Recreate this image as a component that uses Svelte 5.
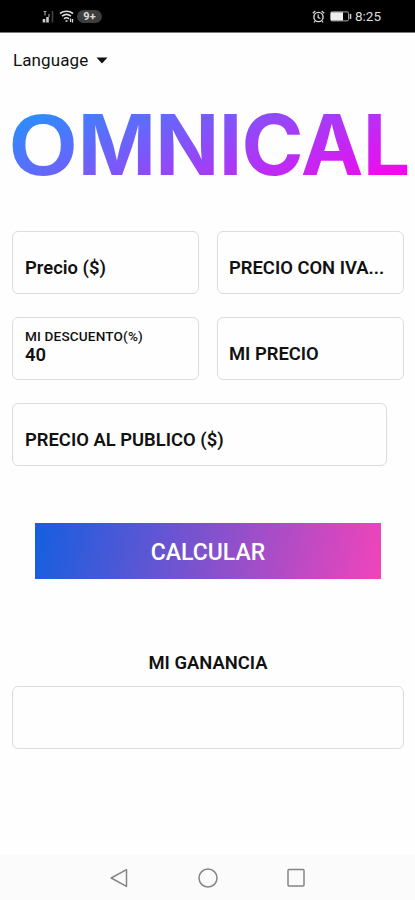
<script lang="ts">
  interface Field {
    id: string;
    label: string;
    value?: string;
    wide?: boolean;
  }

  const fields: Field[] = [
    { id: "precio", label: "Precio ($)" },
    { id: "iva", label: "PRECIO CON IVA..." },
    { id: "descuento", label: "MI DESCUENTO(%)", value: "40" },
    { id: "mi-precio", label: "MI PRECIO" },
    { id: "publico", label: "PRECIO AL PUBLICO ($)", wide: true },
  ];
</script>

<div class="screen">
  <header class="status">
    <div class="status__group">
      <svg class="signal" width="12" height="13" viewBox="0 0 12 13">
        <path d="M2 12.500V9M5.500 12.500V7" stroke="#ccc" stroke-width="2.600" />
        <path d="M10.500 12.500V1" stroke="#444" stroke-width="1.500" />
        <path d="M1.500 1.500h3M3 1.500v4M7 4v3" stroke="#999" stroke-width="1.200" />
      </svg>
      <svg class="wifi" width="15" height="13" viewBox="0 0 15 13" fill="none" stroke="#ddd">
        <path d="M1 3.500C4.800.5 10.200.5 14 3.500" stroke-width="1.600" />
        <path d="M3 6.200C5.700 4 9.300 4 12 6.200M5 8.800c1.600-1.300 3.400-1.300 5 0" stroke-width="1.500" />
        <path d="M6.500 11h2M11.500 8.500v3.500M13.500 9v3.500" stroke-width="1.300" />
      </svg>
      <span class="badge">9+</span>
    </div>
    <div class="status__group">
      <svg class="alarm" width="13" height="13" viewBox="0 0 13 13" fill="none" stroke="#ddd">
        <circle cx="6.500" cy="7" r="4.600" stroke-width="1.400" />
        <path d="M.8 3.200 3.300 1M12.200 3.200 9.700 1M6.200 4.500v3l2.200 1M3 11l-1 1.500M10 11l1 1.500" stroke-width="1.200" />
      </svg>
      <svg class="battery" width="22" height="11" viewBox="0 0 22 11">
        <rect x=".6" y=".9" width="18" height="9" rx="1.500" fill="none" stroke="#aaa" stroke-width="1" />
        <rect x="1" y="1.300" width="12" height="8.200" fill="#eee" />
        <path d="M20.500 3v5" stroke="#ccc" stroke-width="1.600" />
      </svg>
      <time class="clock">8:25</time>
    </div>
  </header>

  <main class="content">
    <button type="button" class="language">
      Language
      <svg width="12" height="7" viewBox="0 0 12 7">
        <path d="M.5.500h11L6 6.500z" fill="#111" />
      </svg>
    </button>

    <h1 class="logo">OMNICAL</h1>

    <div class="fields">
      {#each fields as field (field.id)}
        <div class="field" class:field--wide={field.wide}>
          <span class="field__label" class:field__label--small={field.value}>{field.label}</span>
          {#if field.value}
            <span class="field__value">{field.value}</span>
          {/if}
        </div>
      {/each}
    </div>

    <button type="button" class="submit">CALCULAR</button>

    <h2 class="result-title">MI GANANCIA</h2>
    <output class="result"></output>
  </main>

  <nav class="nav">
    <svg width="20" height="22" viewBox="0 0 20 22">
      <path d="M16.500 2.600v16.800L1.200 11z" />
    </svg>
    <svg width="20" height="22" viewBox="0 0 20 22">
      <circle cx="10" cy="11" r="9" />
    </svg>
    <svg width="20" height="22" viewBox="0 0 20 22">
      <rect x="2" y="2.500" width="16" height="16.500" rx="1" />
    </svg>
  </nav>
</div>

<style>
  :global(body) {
    background: #fefefe;
  }

  .screen {
    display: flex;
    flex-direction: column;
    box-sizing: border-box;
    width: 100%;
    height: 900px;
    overflow: hidden;
    color: #111;
    font-family: Roboto, sans-serif;
  }

  button {
    padding: 0;
    border: 0;
    background: none;
    color: inherit;
    font-family: inherit;
  }

  .status {
    display: flex;
    justify-content: space-between;
    box-sizing: border-box;
    height: 33px;
    padding: 0 34px 0 42px;
    background: #000;
    border-bottom: 1px solid #777;
  }

  .status__group {
    display: flex;
    align-items: center;
  }

  .wifi {
    margin-left: 5px;
  }

  .badge {
    width: 25px;
    height: 13px;
    margin-left: 3px;
    border-radius: 7px;
    background: #3d3d3d;
    color: #ddd;
    font-size: 11px;
    font-weight: 700;
    line-height: 13px;
    text-align: center;
  }

  .battery {
    margin-left: 5px;
  }

  .clock {
    margin-left: 3px;
    color: #ddd;
    font-size: 13.5px;
  }

  .content {
    display: flex;
    flex: 1;
    flex-direction: column;
    padding: 0 11px 0 12px;
  }

  .language {
    display: flex;
    align-items: center;
    align-self: flex-start;
    gap: 8px;
    height: 24px;
    margin: 15px 0 1px 1px;
    font-size: 17px;
    letter-spacing: 0.1px;
  }

  .logo {
    align-self: flex-start;
    height: 74px;
    margin: 35px 0 0 -3px;
    background: linear-gradient(155deg, #1e96ff, #ff00f0);
    background-clip: text;
    color: transparent;
    font-family: Inter, sans-serif;
    font-size: 84px;
    font-weight: 700;
    font-optical-sizing: none;
    letter-spacing: -0.7px;
    line-height: 74px;
  }

  /* rounder initial than the rest of the wordmark */
  .logo::first-letter {
    margin-right: 1px;
    font-family: "Liberation Sans", sans-serif;
    font-size: 88px;
  }

  .fields {
    display: grid;
    grid-template-columns: 187px 187px;
    gap: 23px 18px;
    margin-top: 49px;
  }

  .field {
    display: flex;
    flex-direction: column;
    justify-content: flex-end;
    box-sizing: border-box;
    height: 63px;
    padding: 0 11px 14px 12px;
    border: 1px solid #dcdcdc;
    border-radius: 6px;
    white-space: nowrap;
  }

  .field:nth-child(even) {
    padding-left: 11px;
  }

  .field--wide {
    grid-column: 1 / -1;
    width: 375px;
  }

  .field__label,
  .field__value {
    font-size: 18.4px;
    font-weight: 600;
    line-height: 22px;
  }

  .field__value {
    margin-bottom: -1px;
  }

  .field__label--small {
    font-size: 13.6px;
    font-weight: 500;
    line-height: 16px;
    letter-spacing: 0.15px;
  }

  .submit {
    height: 56px;
    margin: 57px 23px 0;
    padding-top: 2px;
    background: linear-gradient(100deg, #145fe0, #f044bb);
    color: #fff;
    font-size: 23px;
    font-weight: 500;
  }

  .result-title {
    margin: 73px 0 0;
    font-size: 18.4px;
    font-weight: 600;
    line-height: 22px;
    text-align: center;
  }

  .result {
    box-sizing: border-box;
    height: 63px;
    margin-top: 12px;
    border: 1px solid #dcdcdc;
    border-radius: 6px;
  }

  .nav {
    display: flex;
    align-items: center;
    justify-content: center;
    gap: 68px;
    height: 45px;
    background: #fbfbfb;
  }

  .nav svg {
    fill: none;
    stroke: #858585;
    stroke-width: 1.5;
    stroke-linejoin: round;
  }
</style>
